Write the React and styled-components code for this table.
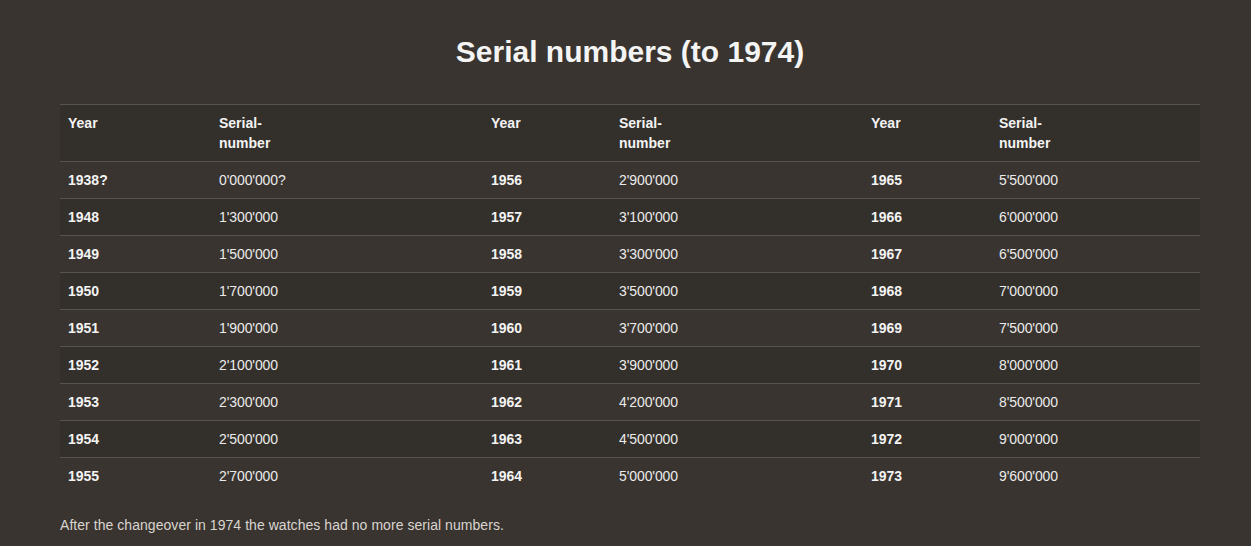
import React from "react";
import styled, { createGlobalStyle } from "styled-components";

const Global = createGlobalStyle`
  html, body { margin: 0; padding: 0; background: #39342f; }
  body { font-family: "Liberation Sans", Arial, sans-serif; color: #f2f2f2; }
`;

const Page = styled.main`
  padding: 0 51px 0 60px;
  min-height: 546px;
  box-sizing: border-box;
  overflow: hidden;
`;

const Title = styled.h1`
  margin: 34px 0 34px;
  font-size: 30px;
  line-height: 36px;
  font-weight: 700;
  text-align: center;
  color: #f4f4f4;
`;

const Table = styled.table`
  width: 1140px;
  border-collapse: collapse;
  table-layout: fixed;
`;

const Row = styled.tr`
  border-top: 1px solid #58534d;
  background: ${(p) => (p.$dark ? "rgba(0,0,0,0.09)" : "transparent")};
`;

const Th = styled.th`
  text-align: left;
  vertical-align: top;
  padding: 8px 8px;
  font-size: 14px;
  line-height: 20px;
  font-weight: 700;
  color: #f3f3f3;
`;

const YearCell = styled.td`
  padding: 8px 8px;
  font-size: 14px;
  line-height: 20px;
  font-weight: 700;
  color: #f3f3f3;
`;

const SerialCell = styled.td`
  padding: 8px 8px;
  font-size: 14px;
  line-height: 20px;
  font-weight: 400;
  color: #ebebeb;
  letter-spacing: -0.1px;
`;

const Note = styled.p`
  margin: 21px 0 0;
  font-size: 14px;
  line-height: 20px;
  color: #d9d5d0;
  letter-spacing: 0.05px;
`;

const cols = [
  [["1938?", "0'000'000?"], ["1948", "1'300'000"], ["1949", "1'500'000"], ["1950", "1'700'000"], ["1951", "1'900'000"], ["1952", "2'100'000"], ["1953", "2'300'000"], ["1954", "2'500'000"], ["1955", "2'700'000"]],
  [["1956", "2'900'000"], ["1957", "3'100'000"], ["1958", "3'300'000"], ["1959", "3'500'000"], ["1960", "3'700'000"], ["1961", "3'900'000"], ["1962", "4'200'000"], ["1963", "4'500'000"], ["1964", "5'000'000"]],
  [["1965", "5'500'000"], ["1966", "6'000'000"], ["1967", "6'500'000"], ["1968", "7'000'000"], ["1969", "7'500'000"], ["1970", "8'000'000"], ["1971", "8'500'000"], ["1972", "9'000'000"], ["1973", "9'600'000"]],
];

const widths = [151, 272, 128, 252, 128, 209];

export default function App() {
  return (
    <>
      <Global />
      <Page>
        <Title>Serial numbers (to 1974)</Title>
        <Table>
          <colgroup>
            {widths.map((w, i) => (
              <col key={i} style={{ width: w }} />
            ))}
          </colgroup>
          <thead>
            <Row $dark>
              {cols.map((_, i) => (
                <React.Fragment key={i}>
                  <Th>Year</Th>
                  <Th>
                    Serial-
                    <br />
                    number
                  </Th>
                </React.Fragment>
              ))}
            </Row>
          </thead>
          <tbody>
            {cols[0].map((_, r) => (
              <Row key={r} $dark={r % 2 === 1}>
                {cols.map((c, i) => (
                  <React.Fragment key={i}>
                    <YearCell>{c[r][0]}</YearCell>
                    <SerialCell>{c[r][1]}</SerialCell>
                  </React.Fragment>
                ))}
              </Row>
            ))}
          </tbody>
        </Table>
        <Note>After the changeover in 1974 the watches had no more serial numbers.</Note>
      </Page>
    </>
  );
}
